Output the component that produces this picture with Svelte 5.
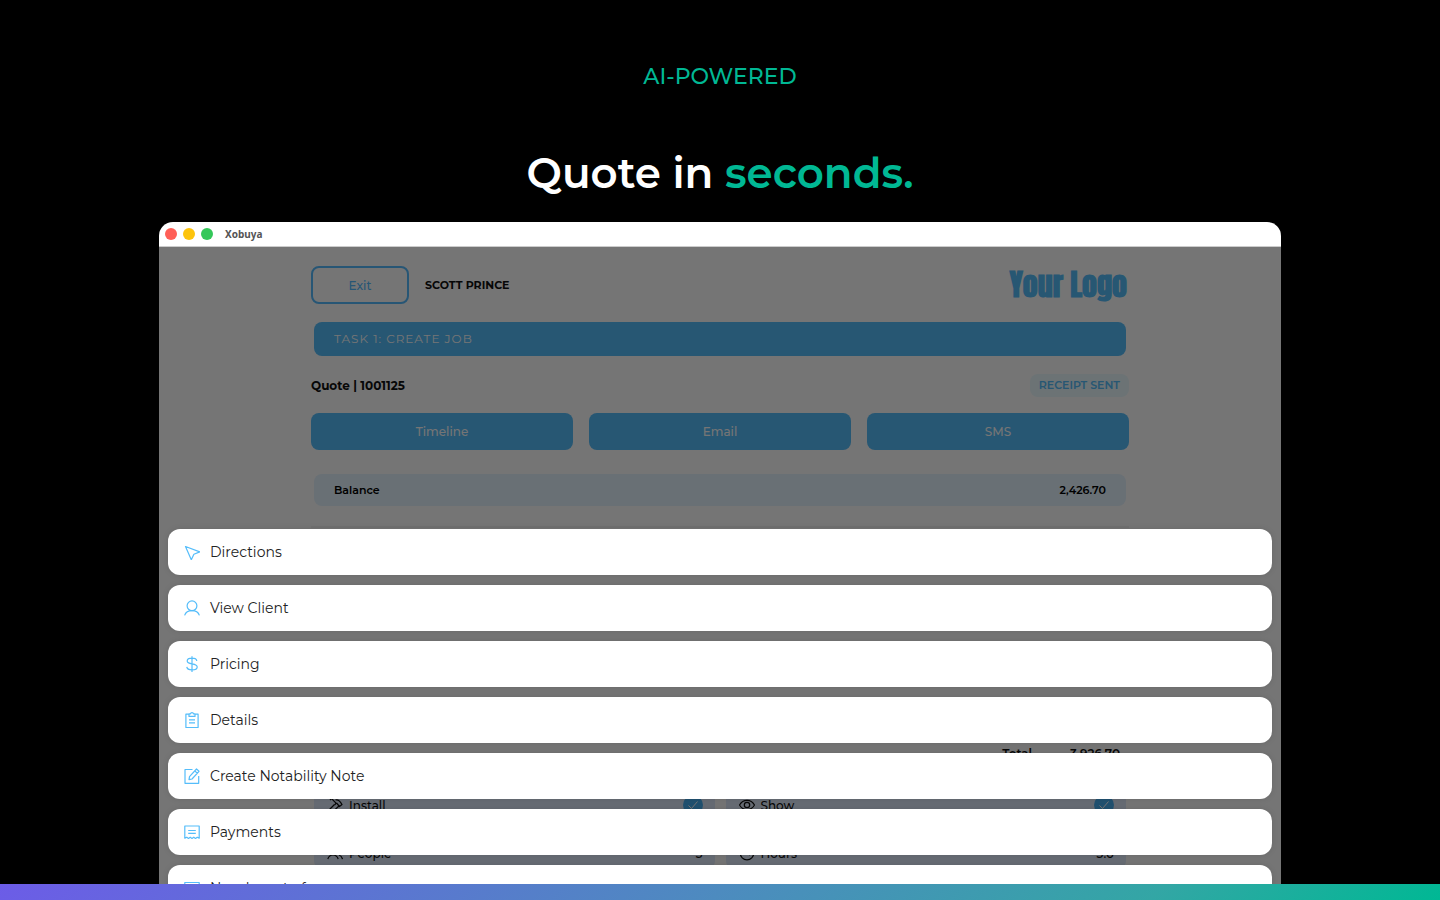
<script>
  const actions = ["Timeline", "Email", "SMS"];

  const details = [
    { icon: "tools", label: "Install", checked: true },
    { icon: "eye", label: "Show", checked: true },
    { icon: "people", label: "People", value: "3" },
    { icon: "clock", label: "Hours", value: "3.0" },
  ];

  const menu = [
    { icon: "cursor", label: "Directions" },
    { icon: "user", label: "View Client" },
    { icon: "dollar", label: "Pricing" },
    { icon: "clipboard", label: "Details" },
    { icon: "edit", label: "Create Notability Note" },
    { icon: "receipt", label: "Payments" },
    { icon: "card", label: "New layout of" },
  ];
</script>

{#snippet icon(name)}
  <svg class="icon" viewBox="0 0 16 16" aria-hidden="true">
    {#if name === "cursor"}
      <path d="M1.500 2.500 15.800 7.900 9.900 10.200 7.300 15.800Z" />
    {:else if name === "user"}
      <circle cx="8" cy="5.800" r="4.900" />
      <path d="M.6 15.400C1.600 12.500 4 10.700 8 10.700s6.400 1.800 7.400 4.700" />
    {:else if name === "dollar"}
      <path d="M8 .3v15.600M12.800 5C12.600 3 10.900 2.200 8 2.200S3.200 3.200 3.200 5c0 4.200 10 1.500 10 6 0 1.900-2.200 2.900-5.200 2.900s-5-1-5.200-3" />
    {:else if name === "clipboard"}
      <path d="M5 2.200H1.900v13.300h12.200V2.200H11M5 1.800h1.500C6.700.2 9.300.2 9.500 1.800H11v2.600H5zM5 7.800h6M5 10.800h6" />
    {:else if name === "edit"}
      <path d="M8.500 1.500H1v13.800h13.700V8M5.500 8.700l7-7.700 2.500 2.300-7 7.700-3 .7zM10.800 2.900l2.500 2.300" />
    {:else if name === "receipt"}
      <path d="M.8 2h14.400v12.200l-2-1-1.700 1.200-1.700-1.200L8 14.400l-1.800-1.200-1.700 1.200-1.700-1.200-2 1zM4.200 6.500h7.600M4.200 9.300h7.600" />
    {:else if name === "card"}
      <path d="M.8 2.500h14.400v12H.8zM.8 6h14.400" />
    {:else if name === "tools"}
      <path d="M1 14 7.500 7.500M3 3l1.500-1.500L9 6.200 7.800 8M6 14.500l6.500-6M8.500 3c3-1 4.500 1 6.500 4.500l-2.500 2-3-3.500" />
    {:else if name === "eye"}
      <path d="M.5 8C4 1.800 12 1.800 15.500 8 12 14.200 4 14.200.5 8z" />
      <circle cx="8" cy="8" r="2.700" />
    {:else if name === "people"}
      <circle cx="6" cy="5" r="3.500" />
      <path d="M.8 14c1-3 3-4 5.200-4s4.200 1 5.200 4M11 2c3 .5 3 5 0 6M12 10c2 .5 3 2 3.500 4" />
    {:else if name === "clock"}
      <circle cx="8" cy="8" r="6.800" />
      <path d="M8 4v4l3 2" />
    {/if}
  </svg>
{/snippet}

<div class="page">
  <header class="hero">
    <p class="tagline">AI-POWERED</p>
    <h1>Quote in <span>seconds.</span></h1>
  </header>

  <div class="stage">
    <section class="window">
      <div class="titlebar">
        <i class="dot red"></i>
        <i class="dot yellow"></i>
        <i class="dot green"></i>
        <span class="app-name">Xobuya</span>
      </div>

      <div class="screen">
        <main class="job">
          <div class="job-head">
            <button class="exit">Exit</button>
            <span class="client">SCOTT PRINCE</span>
            <span class="logo">Your Logo</span>
          </div>

          <div class="task">TASK 1: CREATE JOB</div>

          <div class="quote">
            <h2>Quote | 1001125</h2>
            <span class="badge">RECEIPT SENT</span>
          </div>

          <div class="actions">
            {#each actions as action}
              <button class="action">{action}</button>
            {/each}
          </div>

          <div class="balance">
            <span>Balance</span>
            <span>2,426.70</span>
          </div>

          <div class="items">
            <div class="total">
              <span>Total</span>
              <span>3,926.70</span>
            </div>
          </div>

          <div class="details">
            {#each details as detail}
              <div class="detail">
                {@render icon(detail.icon)}
                <span>{detail.label}</span>
                {#if detail.checked}
                  <svg class="check" viewBox="0 0 20 20" aria-hidden="true">
                    <circle cx="10" cy="10" r="10" />
                    <path d="m5.500 10.500 3 3 6-7" />
                  </svg>
                {:else}
                  <span class="value">{detail.value}</span>
                {/if}
              </div>
            {/each}
          </div>
        </main>

        <!-- action sheet over the dimmed job -->
        <div class="backdrop">
          <nav class="sheet">
            {#each menu as item}
              <button class="sheet-item">
                {@render icon(item.icon)}
                <span>{item.label}</span>
              </button>
            {/each}
          </nav>
        </div>
      </div>
    </section>
  </div>

  <div class="stripe"></div>
</div>

<style>
  :global(body) {
    background: #000;
  }

  .page {
    display: flex;
    flex-direction: column;
    height: 100vh;
    overflow: hidden;
    background: #000;
    color: #111;
    font-family: Montserrat, Inter, sans-serif;
    font-size: 12px;
  }
  button {
    font: inherit;
    cursor: pointer;
  }

  .hero {
    padding-top: 61px;
    text-align: center;
  }
  .tagline {
    margin: 0;
    color: #00b894;
    font-size: 22px;
    font-weight: 500;
    line-height: 32px;
  }
  h1 {
    margin: 50px 0 19px;
    color: #fff;
    font-size: 42px;
    font-weight: 600;
    line-height: 60px;
  }
  h1 span {
    color: #00b894;
  }

  .stage {
    flex: 1;
    display: flex;
    min-height: 0;
    padding: 0 159px;
  }
  .window {
    flex: 1;
    display: flex;
    flex-direction: column;
    border-radius: 14px 14px 0 0;
    background: #fff;
    overflow: hidden;
  }
  .titlebar {
    display: flex;
    align-items: center;
    gap: 6px;
    height: 24px;
    padding: 0 6px;
    border-bottom: 1px solid #ccc;
  }
  .dot {
    width: 12px;
    height: 12px;
    border-radius: 50%;
  }
  .red {
    background: #ff5f57;
  }
  .yellow {
    background: #fdc40c;
  }
  .green {
    background: #34c759;
  }
  .app-name {
    margin-left: 6px;
    color: #555;
    font-family: "Noto Sans", sans-serif;
    font-size: 10px;
    font-weight: 700;
  }

  .screen {
    position: relative;
    flex: 1;
    min-height: 0;
    overflow: hidden;
  }
  .job {
    max-width: 818px;
    margin: 0 auto;
    padding-top: 19px;
  }
  .job-head {
    display: flex;
    align-items: center;
    gap: 16px;
    height: 38px;
  }
  .exit {
    width: 98px;
    height: 38px;
    border: 2px solid #5bf;
    border-radius: 8px;
    background: none;
    color: #5bf;
    font-weight: 500;
  }
  .client {
    font-size: 11px;
    font-weight: 700;
  }
  .logo {
    margin-left: auto;
    padding-right: 2px;
    color: #55bdfa;
    font-family: Impact, Anton, sans-serif;
    font-size: 30px;
    font-weight: 700;
    line-height: 38px;
  }

  .task {
    margin: 18px 3px 0;
    padding: 0 20px;
    border-radius: 8px;
    background: #55bdfa;
    color: #fff;
    letter-spacing: 1px;
    line-height: 34px;
  }

  .quote {
    display: flex;
    align-items: center;
    justify-content: space-between;
    margin: 18px 0 16px;
  }
  .quote h2 {
    margin: 0;
    font-size: 12px;
    font-weight: 700;
  }
  .badge {
    padding: 0 9px;
    border-radius: 8px;
    background: #ebfaff;
    color: #55bdfa;
    font-size: 11px;
    font-weight: 600;
    line-height: 23px;
  }

  .actions {
    display: grid;
    grid-template-columns: repeat(3, 1fr);
    gap: 16px;
  }
  .action {
    height: 37px;
    padding: 0;
    border: 0;
    border-radius: 8px;
    background: #55bdfa;
    color: #fff;
    font-weight: 500;
  }

  .balance {
    display: flex;
    justify-content: space-between;
    margin: 24px 3px 20px;
    padding: 0 20px;
    border-radius: 8px;
    background: #e4f3fe;
    color: #000;
    font-size: 11px;
    font-weight: 600;
    line-height: 32px;
  }

  .items {
    display: flex;
    align-items: flex-end;
    justify-content: flex-end;
    height: 234px;
    border-top: 2px solid #f4f4f4;
  }
  .total {
    display: flex;
    gap: 38px;
    padding-right: 9px;
    font-weight: 600;
    line-height: 16px;
  }

  .details {
    display: grid;
    grid-template-columns: 1fr 1fr;
    gap: 16px 11px;
    margin: 27px 3px 0;
  }
  .detail {
    display: flex;
    align-items: center;
    gap: 6px;
    height: 32px;
    padding: 0 12px 0 13px;
    border-radius: 8px;
    background: #e0ebfc;
    font-weight: 500;
  }
  .value,
  .check {
    margin-left: auto;
  }
  .check {
    width: 20px;
    height: 20px;
    fill: #49b0f5;
  }
  .check path {
    fill: none;
    stroke: #fff;
  }

  .backdrop {
    position: absolute;
    inset: 0;
    background: rgba(0, 0, 0, 0.54);
    overflow: hidden;
  }
  .sheet {
    display: flex;
    flex-direction: column;
    gap: 10px;
    padding: 282px 9px 0;
  }
  .sheet-item {
    display: flex;
    flex-shrink: 0;
    align-items: center;
    gap: 10px;
    height: 46px;
    padding: 0 16px;
    border: 0;
    border-radius: 12px;
    background: #fff;
    color: #222;
    font-size: 14px;
    line-height: 18px;
    box-shadow: 0 0 6px rgba(0, 0, 0, 0.1);
  }

  .icon {
    flex-shrink: 0;
    width: 16px;
    height: 16px;
    fill: none;
    stroke: currentColor;
    stroke-width: 1.2;
    stroke-linejoin: round;
  }
  .sheet-item .icon {
    stroke: #55bdfa;
  }

  .stripe {
    height: 16px;
    background: linear-gradient(135deg, #6c5ce7, #4d8bbf 50%, #33a6a5 80%, #00b894);
  }
</style>
